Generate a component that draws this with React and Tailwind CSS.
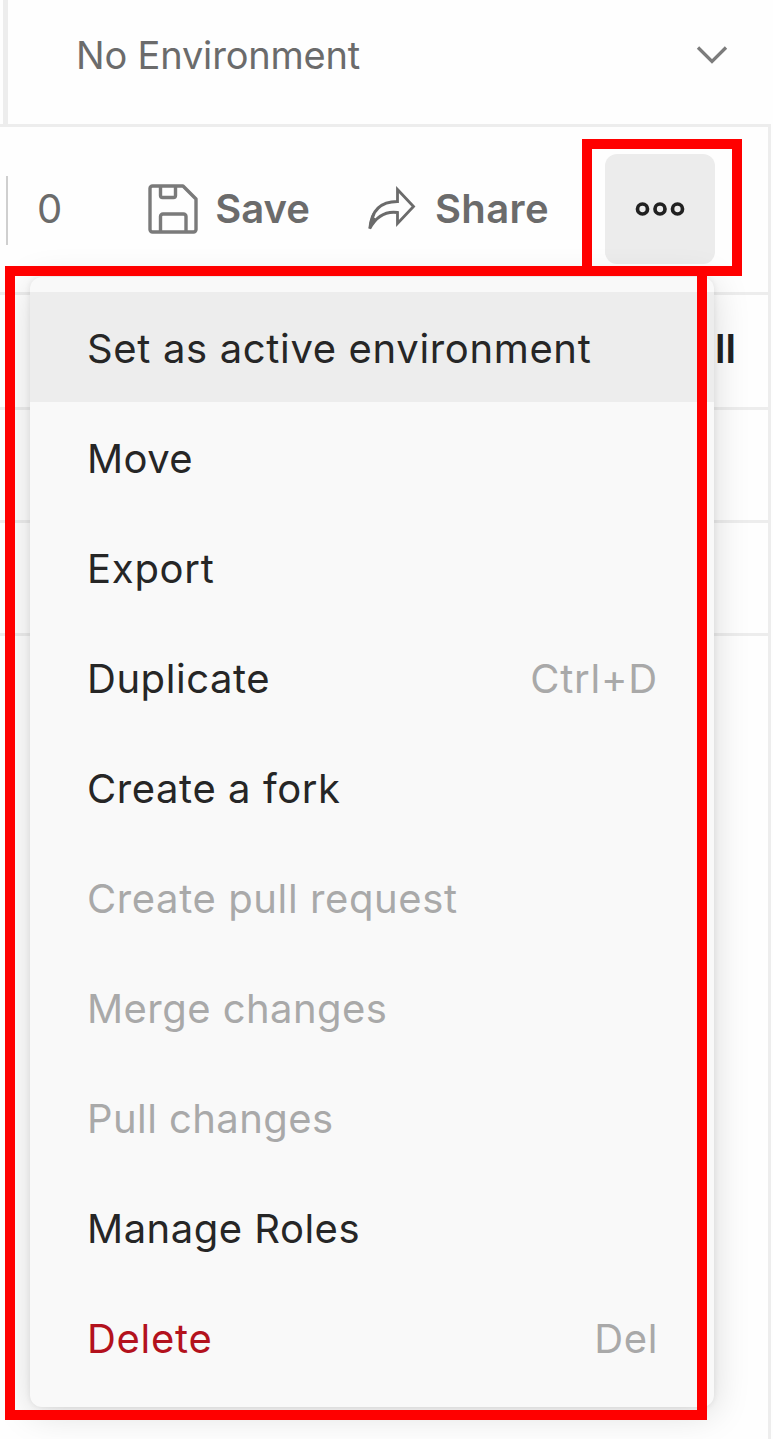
const menuItems = [
  { label: 'Set as active environment', tracking: 'tracking-[0.65px]', active: true },
  { label: 'Move', tracking: 'tracking-[0.4px]' },
  { label: 'Export', tracking: 'tracking-[0.75px]' },
  { label: 'Duplicate', tracking: 'tracking-[0.55px]', shortcut: 'Ctrl+D', shortcutTracking: 'tracking-[0.8px]' },
  { label: 'Create a fork', tracking: 'tracking-[0.58px]' },
  { label: 'Create pull request', tracking: 'tracking-[0.6px]', disabled: true },
  { label: 'Merge changes', tracking: 'tracking-[0.45px]', disabled: true },
  { label: 'Pull changes', tracking: 'tracking-[0.42px]', disabled: true },
  { label: 'Manage Roles', tracking: 'tracking-[0.5px]' },
  { label: 'Delete', tracking: 'tracking-[0.7px]', shortcut: 'Del', shortcutTracking: 'tracking-[0.6px]', danger: true },
];

function SaveIcon() {
  return (
    <svg width="50" height="50" viewBox="0 0 50 50" fill="none" stroke="#7a7a7a" strokeWidth="3.4" strokeLinejoin="round">
      <path d="M4.500 2H35l13 13v30.500a2.500 2.500 0 0 1-2.500 2.500h-41A2.500 2.500 0 0 1 2 45.500v-41A2.500 2.500 0 0 1 4.500 2z" />
      <path d="M12.500 2v9.500a2 2 0 0 0 2 2h11a2 2 0 0 0 2-2V2" />
      <path d="M12.500 48V32.500A2.500 2.500 0 0 1 15 30h20.500a2.500 2.500 0 0 1 2.500 2.500V48" />
    </svg>
  );
}

function ShareIcon() {
  return (
    <svg width="50" height="48" viewBox="0 0 50 48" fill="none" stroke="#6b6b6b" strokeWidth="2.8" strokeLinejoin="miter">
      <path d="M29.500 4.500l16 17-16 17V27.500C18 26 9 30 1.800 43.500C3.500 24 14 16.500 29.500 16.500z" />
      <path d="M6 28.500c-1.200 3-2.200 6-3 10l4.500-5" />
    </svg>
  );
}

function MoreIcon() {
  return (
    <svg width="50" height="16" viewBox="0 0 50 16" fill="none" stroke="#212121" strokeWidth="3.7">
      <circle cx="7.500" cy="8" r="5" />
      <circle cx="25" cy="8" r="5" />
      <circle cx="42.500" cy="8" r="5" />
    </svg>
  );
}

function MenuItem({ label, tracking, shortcut, shortcutTracking, active, disabled, danger }) {
  const color = disabled ? 'text-[#a9a9a9]' : danger ? 'text-[#b3121d]' : 'text-[#262626]';
  return (
    <li className={`flex h-[110px] items-center justify-between pt-[3px] pr-[56px] pl-[57px] ${active ? 'bg-[#ededed]' : ''}`}>
      <span className={`${color} ${tracking}`}>{label}</span>
      {shortcut && <span className={`text-[#a9a9a9] ${shortcutTracking}`}>{shortcut}</span>}
    </li>
  );
}

export default function App() {
  return (
    <div className="relative flex h-[1439px] w-[773px] flex-col overflow-hidden bg-[#fefefe] font-['Inter',sans-serif] text-[40px] leading-[48px] font-normal whitespace-nowrap text-[#6b6b6b]">
      <header className="ml-[3px] flex h-[124px] shrink-0 items-center justify-between border-l-[5px] border-[#ededed] pr-[45px] pb-[15px] pl-[68px]">
        <span className="text-[38px] tracking-[-0.18px]">No Environment</span>
        <svg width="32" height="20" viewBox="0 0 32 20" fill="none" stroke="#7c7c7c" strokeWidth="3.3">
          <path d="M2 2.500l14 14 14-14" />
        </svg>
      </header>

      <main className="mr-[2px] flex grow flex-col border-t-[3px] border-r-[3px] border-[#ededed]">
        <div className="flex h-[165px] shrink-0 items-center pb-[2px]">
          <div className="mt-[4px] ml-[6px] h-[69px] w-[2px] bg-[#cfcfcf]" />
          <span className="ml-[29px] w-[27px]">0</span>
          <button className="ml-[84px] flex items-center gap-[16px] font-semibold">
            <SaveIcon />
            <span className="w-[97px]">Save</span>
          </button>
          <button className="ml-[57px] flex items-center gap-[16px] font-semibold">
            <ShareIcon />
            <span className="w-[116px] tracking-[0.4px]">Share</span>
          </button>
          <button className="ml-[55px] flex h-[110px] w-[110px] shrink-0 items-center justify-center rounded-[12px] bg-[#ececec]">
            <MoreIcon />
          </button>
        </div>
        <div className="flex h-[115px] shrink-0 items-center justify-end border-t-[3px] border-[#ededed] pr-[32px] pb-[5px] font-semibold text-[#212121]">
          ll
        </div>
        <div className="h-[113px] shrink-0 border-t-[3px] border-[#ededed]" />
        <div className="h-[113px] shrink-0 border-t-[3px] border-[#ededed]" />
        <div className="grow border-t-[3px] border-[#ededed]" />
      </main>

      <ul className="absolute top-[277px] left-[30px] w-[684px] rounded-[12px] bg-[#f9f9f9] pt-[15px] pb-[15px] shadow-[0_0_5px_1px_rgba(0,0,0,0.06),0_6px_36px_rgba(0,0,0,0.15)]">
        {menuItems.map((item) => (
          <MenuItem key={item.label} {...item} />
        ))}
      </ul>

      <div className="absolute top-[139px] left-[582px] h-[137px] w-[160px] border-[10px] border-[#ff0000]" />
      <div className="absolute top-[266px] left-[5px] h-[1154px] w-[702px] border-[10px] border-[#ff0000]" />
    </div>
  );
}
